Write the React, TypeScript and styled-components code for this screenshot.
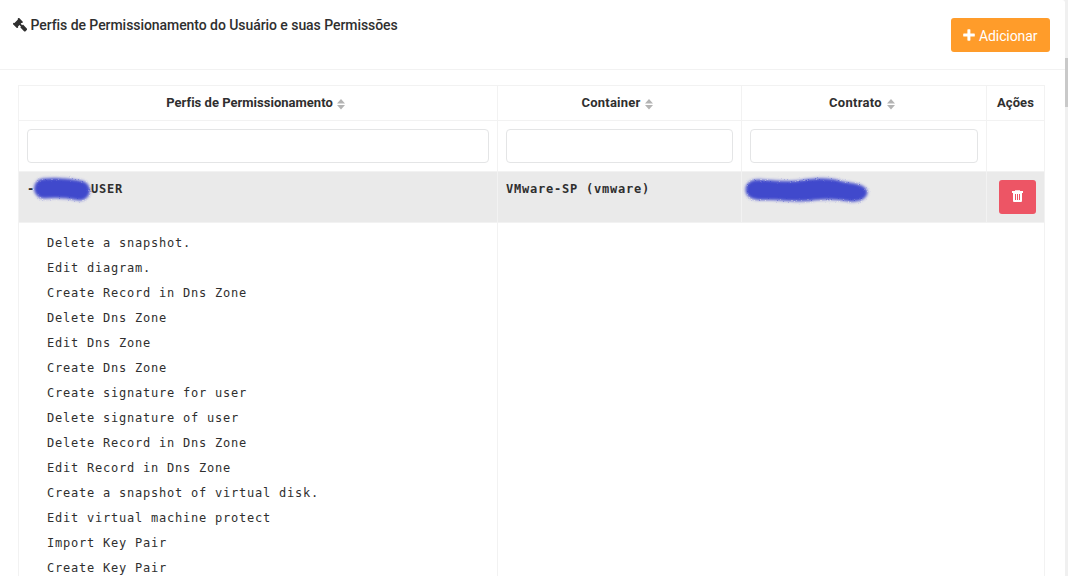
import React from 'react';
import styled, { createGlobalStyle } from 'styled-components';

const GlobalStyle = createGlobalStyle`
  * { box-sizing: border-box; }
  body {
    margin: 0;
    background: #fff;
    color: #2f2f2f;
    font-family: Roboto, "Liberation Sans", sans-serif;
    font-size: 13px;
  }
`;

const Page = styled.div`
  display: flex;
  width: 1068px;
  height: 576px;
  overflow: hidden;
  background: #f0f0f0;
`;

const Card = styled.main`
  width: 1065px;
  background: #fff;
  border-top-right-radius: 3px;
`;

const ScrollTrack = styled.div`
  width: 3px;
  padding-top: 58px;
  background: #f0f0f0;
`;

const ScrollThumb = styled.div`
  height: 49px;
  background: #c9c9c9;
`;

const Header = styled.header`
  display: flex;
  justify-content: space-between;
  height: 70px;
  padding: 18px 15px 0 13px;
  border-bottom: 1px solid #f2f2f2;
`;

const Title = styled.h1`
  display: flex;
  gap: 2.5px;
  height: 16px;
  margin: 0;
  font-size: 14px;
  line-height: 15px;
  font-weight: 500;
  letter-spacing: -0.06px;
  white-space: nowrap;
`;

const AddButton = styled.button`
  display: flex;
  align-items: center;
  gap: 4px;
  width: 99px;
  height: 34px;
  padding: 0 0 0 12px;
  border: 0;
  border-radius: 3px;
  background: #ff9c2a;
  color: #fff;
  font: 400 14px/34px Roboto, sans-serif;
  letter-spacing: -0.1px;
`;

const ButtonLabel = styled.span`
  padding-top: 1px;
`;

const Table = styled.div`
  display: grid;
  grid-template-columns: 479px 244px 245px 58px;
  grid-template-rows: 35px 51px 51px 400px;
  width: 1027px;
  margin: 15px 0 0 18px;
  border-top: 1px solid #f2f2f2;
  border-left: 1px solid #f2f2f2;
`;

const Cell = styled.div`
  padding: 8px;
  border-right: 1px solid #f2f2f2;
  border-bottom: 1px solid #f2f2f2;
`;

const HeadCell = styled(Cell)<{ $spacing?: number; $sortable?: boolean }>`
  display: flex;
  justify-content: center;
  align-items: center;
  gap: 4.5px;
  padding: 0 ${(p) => (p.$sortable ? 4.5 : 0)}px 2px 0;
  font-weight: 700;
  letter-spacing: ${(p) => p.$spacing ?? 0.1}px;
`;

const SortArrows = styled.svg`
  margin-top: 4px;
`;

const FilterInput = styled.input`
  display: block;
  width: 100%;
  height: 34px;
  border: 1px solid #e4e5e6;
  border-radius: 4px;
  background: #fff;
`;

const GroupCell = styled(Cell)`
  display: flex;
  background: #eaeaea;
  font: 700 12px/18px "DejaVu Sans Mono", monospace;
  letter-spacing: 0.776px;
  white-space: pre;
`;

const Redaction = styled.svg<{ $left: number }>`
  flex: none;
  height: 34px;
  margin: -4px 0 0 ${(p) => p.$left}px;
  overflow: visible;
`;

const DeleteButton = styled.button`
  display: flex;
  justify-content: center;
  align-items: center;
  width: 37px;
  height: 34px;
  margin-left: 4px;
  padding: 0 0 2px 0;
  border: 0;
  border-radius: 3px;
  background: #ed5565;
`;

const PermissionList = styled.ul`
  margin: 0;
  padding: 0 0 0 20px;
  list-style: none;
  font: 400 12px/25px "DejaVu Sans Mono", monospace;
  letter-spacing: 0.776px;
  white-space: pre;
`;

const DetailCell = styled(Cell)`
  grid-column: span 3;
`;

const permissions = [
  'Delete a snapshot.',
  'Edit diagram.',
  'Create Record in Dns Zone',
  'Delete Dns Zone',
  'Edit Dns Zone',
  'Create Dns Zone',
  'Create signature for user',
  'Delete signature of user',
  'Delete Record in Dns Zone',
  'Edit Record in Dns Zone',
  'Create a snapshot of virtual disk.',
  'Edit virtual machine protect',
  'Import Key Pair',
  'Create Key Pair',
];

const GavelIcon = () => (
  <svg width="15" height="16" viewBox="0 0 15 16" fill="#2f2f2f">
    <path d="M0 5.4.7 4.7 1.5 5 4.9 1.6 4.7.8 5.4.1H6.2L9.8 3.7V4.4L9.1 5.1 8.4 4.9 7.7 5.7 9.2 7.2 10 6.6 14 10.7V11.8L12.3 13.5H11.3L7.4 9.4 7.9 8.5 6.5 7 5 8.4 5.2 9.2 4.5 9.9H3.8L0 6.2z" />
  </svg>
);

const PlusIcon = () => (
  <svg width="12" height="12" viewBox="0 0 12 12" fill="#fff">
    <path d="M4.4.8q0-.6.6-.6h1.8q.6 0 .6.6v3.6h3.8q.6 0 .6.6v1.9q0 .6-.6.6H7.4v3.6q0 .6-.6.6H5q-.6 0-.6-.6V7.5H.8q-.6 0-.6-.6V5q0-.6.6-.6h3.6z" />
  </svg>
);

const SortIcon = () => (
  <SortArrows width="8" height="11" viewBox="0 0 8 11" fill="#b4b4b4">
    <path d="M4 0 8 4.5H0zM4 10.5 0 6h8z" />
  </SortArrows>
);

const TrashIcon = () => (
  <svg width="11" height="12" viewBox="0 0 11 12" fill="#fff" fillRule="evenodd">
    <path d="M3 1q0-1 1-1h3q1 0 1 1h3v2H0V1zM4 1h3V.8H4zM1 3h9v8q0 1-1 1H2q-1 0-1-1zM3 4v6h1V4zm2 0v6h1V4zm2 0v6h1V4z" />
  </svg>
);

const App = () => (
  <>
    <GlobalStyle />
    <Page>
      <Card>
        <Header>
          <Title><GavelIcon />Perfis de Permissionamento do Usuário e suas Permissões</Title>
          <AddButton><PlusIcon /><ButtonLabel>Adicionar</ButtonLabel></AddButton>
        </Header>
        <Table>
          <HeadCell $sortable $spacing={0.02}>Perfis de Permissionamento<SortIcon /></HeadCell>
          <HeadCell $sortable $spacing={0.2}>Container<SortIcon /></HeadCell>
          <HeadCell $sortable $spacing={0.3}>Contrato<SortIcon /></HeadCell>
          <HeadCell>Ações</HeadCell>
          <Cell><FilterInput /></Cell>
          <Cell><FilterInput /></Cell>
          <Cell><FilterInput /></Cell>
          <Cell />
          <GroupCell>
            <span>-</span>
            <Redaction width="56" $left={0}>
              <defs>
                <filter id="spray" filterUnits="userSpaceOnUse" x="-10" y="-10" width="150" height="50">
                  <feGaussianBlur stdDeviation="1.4" result="soft" />
                  <feTurbulence type="fractalNoise" baseFrequency="0.9" numOctaves="1" result="noise" />
                  <feDisplacementMap in="soft" in2="noise" scale="2.5" xChannelSelector="R" yChannelSelector="G" />
                </filter>
              </defs>
              <path d="M9 12.5C20 11.5 35 12.5 45 14.5" fill="none" stroke="#4149cc" strokeWidth="20" strokeLinecap="round" filter="url(#spray)" />
            </Redaction>
            <span>USER</span>
          </GroupCell>
          <GroupCell>VMware-SP (vmware)</GroupCell>
          <GroupCell>
            <Redaction width="124" $left={-6}>
              <path d="M2 13.5C2 6 9 3.5 16 4C29 5 45 6 55 5C70 2 88 2 99 6C112 8 122 9 123 16C123 23 114 26 105 25C88 22 75 23 65 24.5C50 26 37 23 18 23.5C8 23.5 2 21 2 13.5Z" fill="#4149cc" stroke="#4149cc" filter="url(#spray)" />
            </Redaction>
          </GroupCell>
          <GroupCell>
            <DeleteButton aria-label="Excluir"><TrashIcon /></DeleteButton>
          </GroupCell>
          <Cell>
            <PermissionList>
              {permissions.map((name) => <li key={name}>{name}</li>)}
            </PermissionList>
          </Cell>
          <DetailCell />
        </Table>
      </Card>
      <ScrollTrack><ScrollThumb /></ScrollTrack>
    </Page>
  </>
);

export default App;
